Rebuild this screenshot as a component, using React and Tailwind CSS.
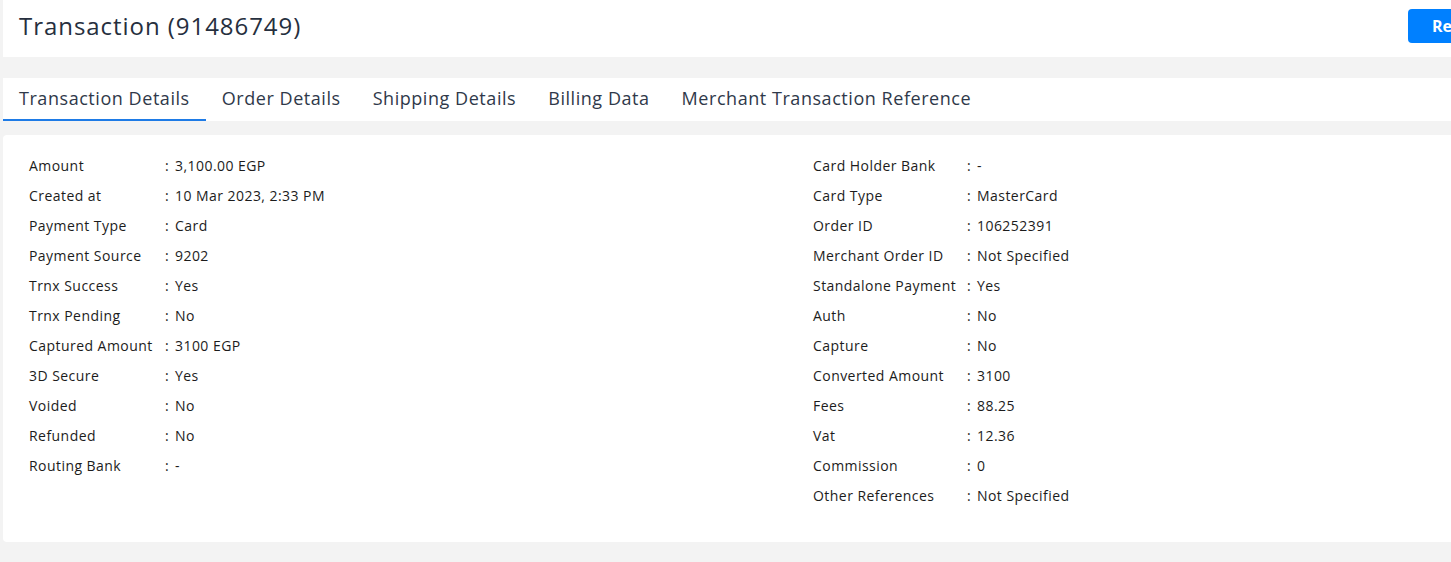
import React from "react";

const left = [
  ["Amount", "3,100.00 EGP"],
  ["Created at", "10 Mar 2023, 2:33 PM"],
  ["Payment Type", "Card"],
  ["Payment Source", "9202"],
  ["Trnx Success", "Yes"],
  ["Trnx Pending", "No"],
  ["Captured Amount", "3100 EGP"],
  ["3D Secure", "Yes"],
  ["Voided", "No"],
  ["Refunded", "No"],
  ["Routing Bank", "-"],
];
const right = [
  ["Card Holder Bank", "-"],
  ["Card Type", "MasterCard"],
  ["Order ID", "106252391"],
  ["Merchant Order ID", "Not Specified"],
  ["Standalone Payment", "Yes"],
  ["Auth", "No"],
  ["Capture", "No"],
  ["Converted Amount", "3100"],
  ["Fees", "88.25"],
  ["Vat", "12.36"],
  ["Commission", "0"],
  ["Other References", "Not Specified"],
];

function Col({ rows, labelW, width }) {
  return (
    <div className={`flex flex-col ${width}`}>
      {rows.map(([k, v]) => (
        <div key={k} className="flex items-center h-[30px] text-[14px] text-[#1c1c1c] tracking-[0.45px]">
          <div className={`${labelW} shrink-0 whitespace-nowrap`}>{k}</div>
          <div className="w-[10px] shrink-0">:</div>
          <div className="whitespace-nowrap">{v}</div>
        </div>
      ))}
    </div>
  );
}

export default function App() {
  const tabs = ["Transaction Details", "Order Details", "Shipping Details", "Billing Data", "Merchant Transaction Reference"];
  return (
    <div className="w-[1451px] h-[562px] overflow-hidden bg-[#f3f3f3]" style={{ fontFamily: "'Open Sans', 'Noto Sans', sans-serif" }}>
      <div className="w-[1600px] pl-[3px]">
        <div className="h-[57px] bg-white flex items-center justify-between pl-[16px] pr-[92px] pb-[5px]">
          <h1 className="text-[24px] font-medium text-[#262f3e] tracking-[0.95px]">Transaction (91486749)</h1>
          <button className="h-[34px] px-[24px] rounded-[4px] bg-[#0080ff] text-white text-[16px] font-bold w-[100px] text-left">Refund</button>
        </div>
        <div className="mt-[21px] h-[43px] bg-white flex items-stretch">
          {tabs.map((t, i) => (
            <div key={t} className={`px-[16px] flex items-center text-[18px] text-[#2f394a] tracking-[0.55px] whitespace-nowrap ${i === 0 ? "border-b-2 border-[#1e7be6]" : "border-b-2 border-transparent"}`}>
              {t}
            </div>
          ))}
        </div>
        <div className="mt-[14px] h-[407px] bg-white rounded-[4px] pt-[15px] pl-[26px] flex">
          <Col rows={left} labelW="w-[136px]" width="w-[784px]" />
          <Col rows={right} labelW="w-[154px]" width="w-[600px]" />
        </div>
      </div>
    </div>
  );
}
